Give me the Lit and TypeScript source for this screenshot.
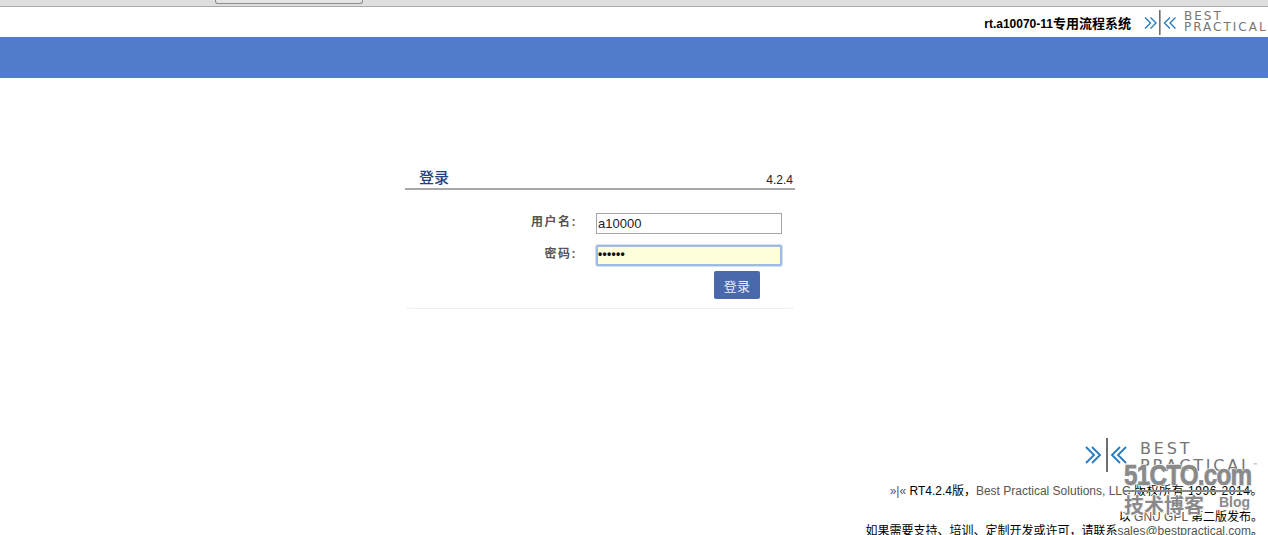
import { LitElement, html, css } from "lit";
import { customElement } from "lit/decorators.js";

const mark = html`<svg class="mk" viewBox="0 0 68 34" aria-hidden="true">
  <path d="M1 9 L9 17 L1 25 M7 9 L15 17 L7 25" fill="none" stroke="#2b7cbf" stroke-width="1.9"/>
  <rect x="21" y="0" width="2" height="34" fill="#6f6f6f"/>
  <path d="M35 9 L27 17 L35 25 M41 9 L33 17 L41 25" fill="none" stroke="#2b7cbf" stroke-width="1.9"/>
</svg>`;

const smallMark = html`<svg class="mk" viewBox="0 0 33 25" aria-hidden="true">
  <path d="M1 7.5 L6.5 13 L1 18.5 M6.5 7.5 L12 13 L6.5 18.5" fill="none" stroke="#2b7cbf" stroke-width="1.4"/>
  <rect x="15" y="0" width="1.6" height="25" fill="#6f6f6f"/>
  <path d="M26 7.5 L20.5 13 L26 18.5 M31.5 7.5 L26 13 L31.5 18.5" fill="none" stroke="#2b7cbf" stroke-width="1.4"/>
</svg>`;

@customElement("app-root")
export class AppRoot extends LitElement {
  static styles = css`
    :host { display: block; height: 535px; overflow: hidden; position: relative; background: #fff;
      font-family: "Liberation Sans", "Noto Sans CJK SC", sans-serif; font-size: 12px; color: #000; }
    .chrome { height: 6px; background: #dfdfdf; border-bottom: 1px solid #a9a9a9; padding-left: 215px; }
    .tab { width: 148px; height: 4px; box-sizing: border-box; border: 1px solid #8c8c8c; border-top: 0; border-radius: 0 0 3px 3px; background: #e4e4e4; }
    .top { height: 30px; display: flex; justify-content: flex-end; align-items: center; overflow: hidden; }
    .name { font-size: 12px; font-weight: 700; margin-right: 13px; white-space: nowrap; }
    .name .zh { font-size: 13px; }
    .toplogo { display: flex; align-items: center; width: 124px; flex: none; }
    .toplogo .mk { width: 33px; height: 25px; flex: none; }
    .toplogo .word { font-family: "DejaVu Sans", sans-serif; font-size: 12px; line-height: 11px; letter-spacing: 2px; color: #757575; margin-left: 7px; white-space: nowrap; }
    .band { height: 41px; background: #517ccb; }
    .wrap { width: 390px; margin: 90px 0 0 405px; }
    .head { display: flex; justify-content: space-between; align-items: flex-end; height: 20px; padding: 0 2px 0 14px; border-bottom: 2px solid #a8a8a8; }
    .title { font-size: 15px; line-height: 20px; color: #21427f; font-weight: 500; }
    .ver { font-size: 12px; line-height: 15px; color: #222; }
    .body { height: 119px; box-sizing: border-box; border-bottom: 1px solid #ececec; border-radius: 0 0 6px 6px; padding-top: 22px; }
    .row { display: grid; grid-template-columns: 172px 186px; column-gap: 19px; align-items: center; height: 21px; margin-bottom: 11px; }
    .lab { text-align: right; font-size: 12px; font-weight: 700; color: #555; letter-spacing: 1.5px; padding-bottom: 5px; }
    .inp { box-sizing: border-box; width: 186px; height: 21px; border: 1px solid #a6a6a6; background: #fff; font-size: 13px; line-height: 19px; padding-left: 1px; color: #222; }
    .pw { background: #ffffdc; border: 2px solid #9dbbe4; border-radius: 2px; box-shadow: 0 0 0 1px rgba(157, 187, 228, .45); padding-left: 0; font-size: 12px; line-height: 15px; color: #111; letter-spacing: .3px; font-weight: 700; }
    .btnrow { display: flex; justify-content: flex-end; padding-right: 35px; margin-top: -5px; }
    .btn { width: 46px; height: 28px; display: flex; align-items: center; justify-content: center; background: #4a69ad; border-radius: 2px; color: #e8edf7; font-size: 13px; letter-spacing: .3px; }
    .foot { position: absolute; right: 5px; top: 438px; text-align: right; width: 420px; font-size: 12px; line-height: 20px; }
    .foot .logo { display: flex; justify-content: flex-end; height: 34px; margin-right: 3px; }
    .foot .mk { width: 68px; height: 34px; flex: none; margin-right: -13px; }
    .foot .word { font-family: "DejaVu Sans", sans-serif; font-size: 16px; line-height: 17px; letter-spacing: 2.8px; color: #757575; text-align: left; white-space: nowrap; width: 120px; padding-top: 2px; }
    .word sup { font-size: 5px; letter-spacing: 0; vertical-align: top; }
    .g { color: #555; }
    .foot p { margin: 0; white-space: nowrap; height: 20px; }
    .foot .l1 { margin-top: 9px; }
    .foot .l2 { margin-top: 6px; }
    .foot .l3 { margin-top: -6px; }
    .wide { letter-spacing: .55px; }
    .wm { position: absolute; left: 1124px; top: 460px; width: 135px; height: 75px; pointer-events: none;
      color: #8a8a8a; font-family: "Liberation Sans", "Noto Sans CJK SC", sans-serif; font-weight: 700;
      text-shadow: 1px 0 #fff, -1px 0 #fff, 0 1px #fff, 0 -1px #fff, 1px 1px #ddd; }
    .wm .a { font-size: 30px; line-height: 30px; letter-spacing: -1px; -webkit-text-stroke: .7px #8a8a8a; transform: scaleX(.81); transform-origin: left top; white-space: nowrap; }
    .wm .bar { position: absolute; left: 0; top: 30px; width: 128px; height: 2px; background: #8a8a8a; }
    .wm .b { position: absolute; left: 0; top: 34px; font-size: 20px; line-height: 24px; white-space: nowrap; }
    .wm .c { position: absolute; left: 95px; top: 34px; font-size: 14px; line-height: 16px; }
  `;

  render() {
    return html`
      <div class="chrome"><div class="tab"></div></div>
      <div class="top">
        <span class="name">rt.a10070-11<span class="zh">专用流程系统</span></span>
        <div class="toplogo">${smallMark}<div class="word">BEST<br />PRACTICAL</div></div>
      </div>
      <div class="band"></div>
      <div class="wrap">
        <div class="head"><span class="title">登录</span><span class="ver">4.2.4</span></div>
        <div class="body">
          <div class="row"><span class="lab">用户名:</span><div class="inp">a10000</div></div>
          <div class="row"><span class="lab">密码:</span><div class="inp pw">••••••</div></div>
          <div class="btnrow"><div class="btn">登录</div></div>
        </div>
      </div>
      <div class="foot">
        <div class="logo">${mark}<div class="word">BEST<br />PRACTICAL<sup>™</sup></div></div>
        <p class="l1"><span class="g">»|«</span> RT4.2.4版，<span class="g">Best Practical Solutions, LLC</span> <span class="wide">版权所有 1996-2014。</span></p>
        <p class="l2">以 <span class="g">GNU GPL</span> 第二版发布。</p>
        <p class="l3">如果需要支持、培训、定制开发或许可，请联系<span class="g">sales@bestpractical.com</span>。</p>
      </div>
      <div class="wm">
        <div class="a">51CTO.com</div>
        <div class="bar"></div>
        <div class="b">技术博客</div>
        <div class="c">Blog</div>
      </div>
    `;
  }
}
